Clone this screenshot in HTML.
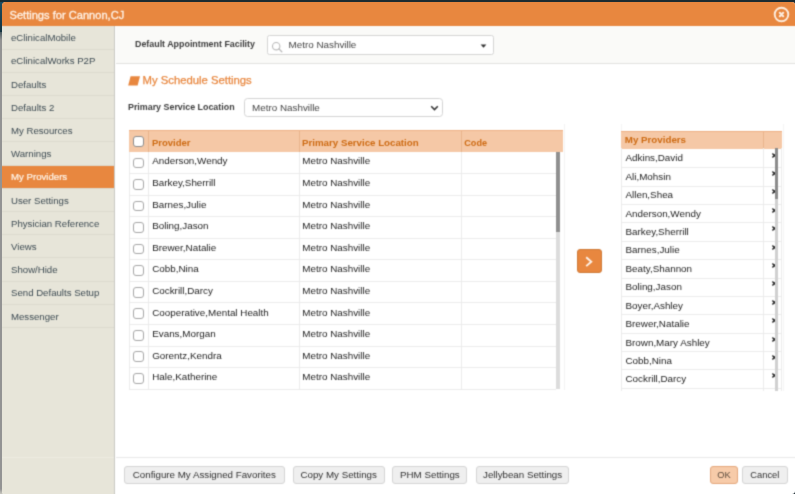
<!DOCTYPE html><html><head><meta charset='utf-8'><title>Settings</title><style>
*{box-sizing:border-box;margin:0;padding:0}
html,body{width:795px;height:494px;overflow:hidden}
body{background:#1c2b31;font-family:"Liberation Sans",sans-serif;position:relative;color:#333}
.abs{position:absolute}
#edgeL1{left:0;top:2px;width:6px;height:30px;background:linear-gradient(#1d4d60,#14323f)}
#edgeL2{left:0;top:32px;width:6px;height:462px;background:linear-gradient(#4a5a60,#939393 8px,#939393 457px,#c9c8c0 462px)}
#dlg{filter:url(#soft);left:2px;top:2px;width:793px;height:492px;background:#fff;border-radius:3.5px 3px 3px 2px;overflow:hidden}
#title{left:0;top:0;width:793px;height:24px;background:#e8873f}
#title span{position:absolute;left:7.5px;top:5.6px;font-size:11.1px;color:#fff3e8;-webkit-text-stroke:0.3px #fff3e8;white-space:nowrap;line-height:14px}
#side{left:0;top:24px;width:113px;height:468px;background:#e7e5d9;border-right:1px solid #c9c9c4}
.si{position:absolute;left:0;width:112px;height:23.2px;border-bottom:1px solid #dcdacf;font-size:9.65px;color:#3c4a52;white-space:nowrap}
.si.act{background:#e8873f;color:#fff5ea;-webkit-text-stroke:0.2px #fff5ea}
#top{left:114px;top:24px;width:679px;height:37.5px;background:#fafaf8;border-bottom:1px solid #e2e2e0}
.lbl{font-weight:bold;font-size:8.9px;color:#3c3c3c;white-space:nowrap;line-height:12px}
.tx{font-size:9.85px;color:#1c1c1c;white-space:nowrap;line-height:12px}
.box{background:#fff;border:1px solid #ccc;border-radius:2px}
.hd{background:#f5c8a6;border-top:1px solid #eeb084}
.ht{font-weight:bold;font-size:9.5px;color:#cd6a12;white-space:nowrap;line-height:12px}
.cb{width:11px;height:10.8px;border:1.4px solid #a6a6a6;border-radius:3px;background:#fff}
.hl{height:1px;background:#ebebeb}
.vl{width:1px;background:#ebebeb}
.btn{position:absolute;top:464px;height:18.3px;border:1px solid #d4d4d4;border-radius:3px;background:#efefef;font-size:9.75px;color:#303030;text-align:center;line-height:16.3px;white-space:nowrap}
</style></head><body>
<svg width='0' height='0' style='position:absolute'><filter id='soft' x='0' y='0' width='1' height='1' color-interpolation-filters='sRGB'><feConvolveMatrix order='3' kernelMatrix='1 4 1 4 16 4 1 4 1' divisor='36' edgeMode='duplicate' preserveAlpha='true'/></filter></svg>
<div id='edgeL1' class='abs'></div><div id='edgeL2' class='abs'></div>
<div id='dlg' class='abs'>
<div id='title' class='abs'><span>Settings for Cannon,CJ</span>
<svg class='abs' style='left:771.1px;top:3.6px' width='17' height='17' viewBox='0 0 17 17'><circle cx='8.5' cy='8.5' r='6.8' fill='none' stroke='#fdeee0' stroke-width='1.9'/><path d='M6.8 6.8 L10.2 10.2 M10.2 6.8 L6.8 10.2' stroke='#fdeee0' stroke-width='2.1' stroke-linecap='round'/></svg>
</div>
<div id='side' class='abs'>
<div class='si' style='top:0px;height:24px'><span style='position:absolute;left:9px;top:5.6px;line-height:12px'>eClinicalMobile</span></div>
<div class='si' style='top:24px;height:23px'><span style='position:absolute;left:9px;top:4.6px;line-height:12px'>eClinicalWorks P2P</span></div>
<div class='si' style='top:47px;height:23px'><span style='position:absolute;left:9px;top:5.6px;line-height:12px'>Defaults</span></div>
<div class='si' style='top:70px;height:23px'><span style='position:absolute;left:9px;top:5.6px;line-height:12px'>Defaults 2</span></div>
<div class='si' style='top:93px;height:23px'><span style='position:absolute;left:9px;top:5.6px;line-height:12px'>My Resources</span></div>
<div class='si' style='top:116px;height:24px'><span style='position:absolute;left:9px;top:5.6px;line-height:12px'>Warnings</span></div>
<div class='si act' style='top:140px;height:23px'><span style='position:absolute;left:9px;top:4.6px;line-height:12px'>My Providers</span></div>
<div class='si' style='top:163px;height:23px'><span style='position:absolute;left:9px;top:5.6px;line-height:12px'>User Settings</span></div>
<div class='si' style='top:186px;height:23px'><span style='position:absolute;left:9px;top:5.6px;line-height:12px'>Physician Reference</span></div>
<div class='si' style='top:209px;height:23px'><span style='position:absolute;left:9px;top:5.6px;line-height:12px'>Views</span></div>
<div class='si' style='top:232px;height:24px'><span style='position:absolute;left:9px;top:5.6px;line-height:12px'>Show/Hide</span></div>
<div class='si' style='top:256px;height:23px'><span style='position:absolute;left:9px;top:4.6px;line-height:12px'>Send Defaults Setup</span></div>
<div class='si' style='top:279px;height:23px'><span style='position:absolute;left:9px;top:5.6px;line-height:12px'>Messenger</span></div>
<div class='abs' style='left:0;top:430.5px;width:112px;height:1px;background:#edebe1'></div>
</div>
<div id='top' class='abs'></div>
<div class='abs lbl' style='left:133px;top:35.5px'>Default Appointment Facility</div>
<div class='abs box' style='left:265px;top:33px;width:226.6px;height:19.6px;border:1.5px solid #d4d4d4;border-radius:2.5px'></div>
<svg class='abs' style='left:269px;top:39px' width='13' height='13' viewBox='0 0 13 13'><circle cx='5.2' cy='5.2' r='3.7' fill='none' stroke='#b9b9b9' stroke-width='1.1'/><path d='M7.9 7.9 L10.8 10.8' stroke='#b9b9b9' stroke-width='1.3' stroke-linecap='round'/></svg>
<div class='abs tx' style='left:286.5px;top:37.4px;color:#444'>Metro Nashville</div>
<svg class='abs' style='left:477.6px;top:41.5px' width='8' height='5' viewBox='0 0 8 5'><path d='M0.6 0.5 L6.4 0.5 L3.5 3.8 Z' fill='#333'/></svg>
<svg class='abs' style='left:125.5px;top:74px' width='13' height='10' viewBox='0 0 13 10'><path d='M2.6 0.3 L12 0.3 L9.6 9.4 L0.2 9.4 Z' fill='#e8873f'/></svg>
<div class='abs' style='left:140.5px;top:70.8px;font-size:11.3px;color:#e8873f;-webkit-text-stroke:0.25px #e8873f;white-space:nowrap;line-height:14px'>My Schedule Settings</div>
<div class='abs lbl' style='left:126px;top:98.5px'>Primary Service Location</div>
<div class='abs box' style='left:242.3px;top:95.7px;width:198.4px;height:19.6px;border:1.5px solid #d4d4d4;border-radius:3.5px'></div>
<div class='abs tx' style='left:250px;top:100.2px;color:#444'>Metro Nashville</div>
<svg class='abs' style='left:427.7px;top:102.8px' width='9' height='7' viewBox='0 0 9 7'><path d='M1.2 1.3 L4.5 4.6 L7.8 1.3' fill='none' stroke='#333' stroke-width='1.5'/></svg>
<div class='abs hd' style='left:126.8px;top:128.2px;width:434px;height:22.2px'></div>
<div class='abs cb' style='left:130.8px;top:134px;border-color:#8c8c8c'></div>
<div class='abs ht' style='left:150px;top:135px'>Provider</div>
<div class='abs ht' style='left:300px;top:135px;font-size:9.72px'>Primary Service Location</div>
<div class='abs ht' style='left:462.3px;top:135px;font-size:9.1px'>Code</div>
<div class='abs' style='left:145.7px;top:129.2px;width:1px;height:20.7px;background:#e9b48c'></div>
<div class='abs' style='left:297.1px;top:129.2px;width:1px;height:20.7px;background:#e9b48c'></div>
<div class='abs' style='left:458.6px;top:129.2px;width:1px;height:20.7px;background:#e9b48c'></div>
<div class='abs cb' style='left:131.3px;top:155.50px'></div>
<div class='abs tx' style='left:150.2px;top:152.60px'>Anderson,Wendy</div>
<div class='abs tx' style='left:300.3px;top:152.60px'>Metro Nashville</div>
<div class='abs hl' style='left:126.8px;top:171.24px;width:427px'></div>
<div class='abs cb' style='left:131.3px;top:177.04px'></div>
<div class='abs tx' style='left:150.2px;top:174.60px'>Barkey,Sherrill</div>
<div class='abs tx' style='left:300.3px;top:174.60px'>Metro Nashville</div>
<div class='abs hl' style='left:126.8px;top:192.78px;width:427px'></div>
<div class='abs cb' style='left:131.3px;top:198.58px'></div>
<div class='abs tx' style='left:150.2px;top:196.60px'>Barnes,Julie</div>
<div class='abs tx' style='left:300.3px;top:196.60px'>Metro Nashville</div>
<div class='abs hl' style='left:126.8px;top:214.32px;width:427px'></div>
<div class='abs cb' style='left:131.3px;top:220.12px'></div>
<div class='abs tx' style='left:150.2px;top:217.60px'>Boling,Jason</div>
<div class='abs tx' style='left:300.3px;top:217.60px'>Metro Nashville</div>
<div class='abs hl' style='left:126.8px;top:235.86px;width:427px'></div>
<div class='abs cb' style='left:131.3px;top:241.66px'></div>
<div class='abs tx' style='left:150.2px;top:239.60px'>Brewer,Natalie</div>
<div class='abs tx' style='left:300.3px;top:239.60px'>Metro Nashville</div>
<div class='abs hl' style='left:126.8px;top:257.40px;width:427px'></div>
<div class='abs cb' style='left:131.3px;top:263.20px'></div>
<div class='abs tx' style='left:150.2px;top:260.60px'>Cobb,Nina</div>
<div class='abs tx' style='left:300.3px;top:260.60px'>Metro Nashville</div>
<div class='abs hl' style='left:126.8px;top:278.94px;width:427px'></div>
<div class='abs cb' style='left:131.3px;top:284.74px'></div>
<div class='abs tx' style='left:150.2px;top:282.60px'>Cockrill,Darcy</div>
<div class='abs tx' style='left:300.3px;top:282.60px'>Metro Nashville</div>
<div class='abs hl' style='left:126.8px;top:300.48px;width:427px'></div>
<div class='abs cb' style='left:131.3px;top:306.28px'></div>
<div class='abs tx' style='left:150.2px;top:304.60px'>Cooperative,Mental Health</div>
<div class='abs tx' style='left:300.3px;top:304.60px'>Metro Nashville</div>
<div class='abs hl' style='left:126.8px;top:322.02px;width:427px'></div>
<div class='abs cb' style='left:131.3px;top:327.82px'></div>
<div class='abs tx' style='left:150.2px;top:325.60px'>Evans,Morgan</div>
<div class='abs tx' style='left:300.3px;top:325.60px'>Metro Nashville</div>
<div class='abs hl' style='left:126.8px;top:343.56px;width:427px'></div>
<div class='abs cb' style='left:131.3px;top:349.36px'></div>
<div class='abs tx' style='left:150.2px;top:347.60px'>Gorentz,Kendra</div>
<div class='abs tx' style='left:300.3px;top:347.60px'>Metro Nashville</div>
<div class='abs hl' style='left:126.8px;top:365.10px;width:427px'></div>
<div class='abs cb' style='left:131.3px;top:370.90px'></div>
<div class='abs tx' style='left:150.2px;top:368.60px'>Hale,Katherine</div>
<div class='abs tx' style='left:300.3px;top:368.60px'>Metro Nashville</div>
<div class='abs hl' style='left:126.8px;top:386.64px;width:427px'></div>
<div class='abs vl' style='left:126.8px;top:150.2px;height:236.9px'></div>
<div class='abs vl' style='left:145.7px;top:150.2px;height:236.9px'></div>
<div class='abs vl' style='left:297.1px;top:150.2px;height:236.9px'></div>
<div class='abs vl' style='left:458.6px;top:150.2px;height:236.9px'></div>
<div class='abs' style='left:553.8px;top:150.2px;width:4px;height:236.9px;background:#dcdcdc'></div>
<div class='abs' style='left:553.8px;top:149.89999999999998px;width:4px;height:80px;background:#8f8f8f'></div>
<div class='abs' style='left:561.8px;top:122.19999999999999px;width:1px;height:266px;background:#f3f3f3'></div>
<div class='abs' style='left:618.6px;top:122px;width:1px;height:7px;background:#f4f4f4'></div>
<div class='abs' style='left:780.6px;top:122px;width:1px;height:267px;background:#f4f4f4'></div>
<div class='abs' style='left:574.6px;top:246.6px;width:25px;height:24.2px;background:#e8873f;border:1px solid #cf7936;border-radius:3px'></div>
<svg class='abs' style='left:581.2px;top:252.4px' width='12' height='14' viewBox='0 0 12 14'><path d='M3.2 3.3 L8.3 7.7 L3.2 12.1' fill='none' stroke='#fdf3ea' stroke-width='1.9'/></svg>
<div class='abs hd' style='left:618.9px;top:128.5px;width:161px;height:18px'></div>
<div class='abs ht' style='left:622.8px;top:132px;font-size:9.75px'>My Providers</div>
<div class='abs' style='left:761.2px;top:129.5px;width:1px;height:17px;background:#e9b48c'></div>
<div class='abs' style='left:618.9px;top:146.4px;width:164px;height:243px;overflow:hidden'>
<div class='abs tx' style='left:4.6px;top:3.20px'>Adkins,David</div>
<svg class='abs' style='left:150px;top:3.30px' width='7' height='7' viewBox='0 0 7 7'><path d='M1.4 1.4 L5.4 5.4 M5.4 1.4 L1.4 5.4' stroke='#222' stroke-width='1.4'/></svg>
<div class='abs hl' style='left:0;top:19.00px;width:161px'></div>
<div class='abs tx' style='left:4.6px;top:22.20px'>Ali,Mohsin</div>
<svg class='abs' style='left:150px;top:21.70px' width='7' height='7' viewBox='0 0 7 7'><path d='M1.4 1.4 L5.4 5.4 M5.4 1.4 L1.4 5.4' stroke='#222' stroke-width='1.4'/></svg>
<div class='abs hl' style='left:0;top:37.36px;width:161px'></div>
<div class='abs tx' style='left:4.6px;top:40.20px'>Allen,Shea</div>
<svg class='abs' style='left:150px;top:40.10px' width='7' height='7' viewBox='0 0 7 7'><path d='M1.4 1.4 L5.4 5.4 M5.4 1.4 L1.4 5.4' stroke='#222' stroke-width='1.4'/></svg>
<div class='abs hl' style='left:0;top:55.72px;width:161px'></div>
<div class='abs tx' style='left:4.6px;top:59.20px'>Anderson,Wendy</div>
<svg class='abs' style='left:150px;top:58.50px' width='7' height='7' viewBox='0 0 7 7'><path d='M1.4 1.4 L5.4 5.4 M5.4 1.4 L1.4 5.4' stroke='#222' stroke-width='1.4'/></svg>
<div class='abs hl' style='left:0;top:74.08px;width:161px'></div>
<div class='abs tx' style='left:4.6px;top:77.20px'>Barkey,Sherrill</div>
<svg class='abs' style='left:150px;top:76.90px' width='7' height='7' viewBox='0 0 7 7'><path d='M1.4 1.4 L5.4 5.4 M5.4 1.4 L1.4 5.4' stroke='#222' stroke-width='1.4'/></svg>
<div class='abs hl' style='left:0;top:92.44px;width:161px'></div>
<div class='abs tx' style='left:4.6px;top:95.20px'>Barnes,Julie</div>
<svg class='abs' style='left:150px;top:95.30px' width='7' height='7' viewBox='0 0 7 7'><path d='M1.4 1.4 L5.4 5.4 M5.4 1.4 L1.4 5.4' stroke='#222' stroke-width='1.4'/></svg>
<div class='abs hl' style='left:0;top:110.80px;width:161px'></div>
<div class='abs tx' style='left:4.6px;top:114.20px'>Beaty,Shannon</div>
<svg class='abs' style='left:150px;top:113.70px' width='7' height='7' viewBox='0 0 7 7'><path d='M1.4 1.4 L5.4 5.4 M5.4 1.4 L1.4 5.4' stroke='#222' stroke-width='1.4'/></svg>
<div class='abs hl' style='left:0;top:129.16px;width:161px'></div>
<div class='abs tx' style='left:4.6px;top:132.20px'>Boling,Jason</div>
<svg class='abs' style='left:150px;top:132.10px' width='7' height='7' viewBox='0 0 7 7'><path d='M1.4 1.4 L5.4 5.4 M5.4 1.4 L1.4 5.4' stroke='#222' stroke-width='1.4'/></svg>
<div class='abs hl' style='left:0;top:147.52px;width:161px'></div>
<div class='abs tx' style='left:4.6px;top:151.20px'>Boyer,Ashley</div>
<svg class='abs' style='left:150px;top:150.50px' width='7' height='7' viewBox='0 0 7 7'><path d='M1.4 1.4 L5.4 5.4 M5.4 1.4 L1.4 5.4' stroke='#222' stroke-width='1.4'/></svg>
<div class='abs hl' style='left:0;top:165.88px;width:161px'></div>
<div class='abs tx' style='left:4.6px;top:169.20px'>Brewer,Natalie</div>
<svg class='abs' style='left:150px;top:168.90px' width='7' height='7' viewBox='0 0 7 7'><path d='M1.4 1.4 L5.4 5.4 M5.4 1.4 L1.4 5.4' stroke='#222' stroke-width='1.4'/></svg>
<div class='abs hl' style='left:0;top:184.24px;width:161px'></div>
<div class='abs tx' style='left:4.6px;top:188.20px'>Brown,Mary Ashley</div>
<svg class='abs' style='left:150px;top:187.30px' width='7' height='7' viewBox='0 0 7 7'><path d='M1.4 1.4 L5.4 5.4 M5.4 1.4 L1.4 5.4' stroke='#222' stroke-width='1.4'/></svg>
<div class='abs hl' style='left:0;top:202.60px;width:161px'></div>
<div class='abs tx' style='left:4.6px;top:206.20px'>Cobb,Nina</div>
<svg class='abs' style='left:150px;top:205.70px' width='7' height='7' viewBox='0 0 7 7'><path d='M1.4 1.4 L5.4 5.4 M5.4 1.4 L1.4 5.4' stroke='#222' stroke-width='1.4'/></svg>
<div class='abs hl' style='left:0;top:220.96px;width:161px'></div>
<div class='abs tx' style='left:4.6px;top:224.20px'>Cockrill,Darcy</div>
<svg class='abs' style='left:150px;top:224.10px' width='7' height='7' viewBox='0 0 7 7'><path d='M1.4 1.4 L5.4 5.4 M5.4 1.4 L1.4 5.4' stroke='#222' stroke-width='1.4'/></svg>
<div class='abs hl' style='left:0;top:239.32px;width:161px'></div>
<div class='abs tx' style='left:4.6px;top:243.20px'></div>
<div class='abs hl' style='left:0;top:257.68px;width:161px'></div>
<div class='abs vl' style='left:0px;top:0;height:243px'></div>
<div class='abs vl' style='left:142.6px;top:0;height:243px'></div>
<div class='abs vl' style='left:160px;top:0;height:243px'></div>
<div class='abs' style='left:154.2px;top:0;width:3.3px;height:243px;background:#d0d0d0'></div>
<div class='abs' style='left:154.2px;top:0;width:3.3px;height:50.6px;background:#8c8c8c'></div>
</div>
<div class='abs' style='left:114px;top:455px;width:679px;height:1px;background:#e9e9e9'></div>
<div class='btn' style='left:121.8px;width:161px'>Configure My Assigned Favorites</div>
<div class='btn' style='left:290.8px;width:91.8px'>Copy My Settings</div>
<div class='btn' style='left:390.4px;width:75px'>PHM Settings</div>
<div class='btn' style='left:473.7px;width:93.8px'>Jellybean Settings</div>
<div class='btn' style='left:708px;width:28px;background:#f7cba9;border-color:#e4a77c;font-size:9.3px;color:#5a4a3c'>OK</div>
<div class='btn' style='left:740px;width:45.6px;font-size:9.35px'>Cancel</div>
</div></body></html>
